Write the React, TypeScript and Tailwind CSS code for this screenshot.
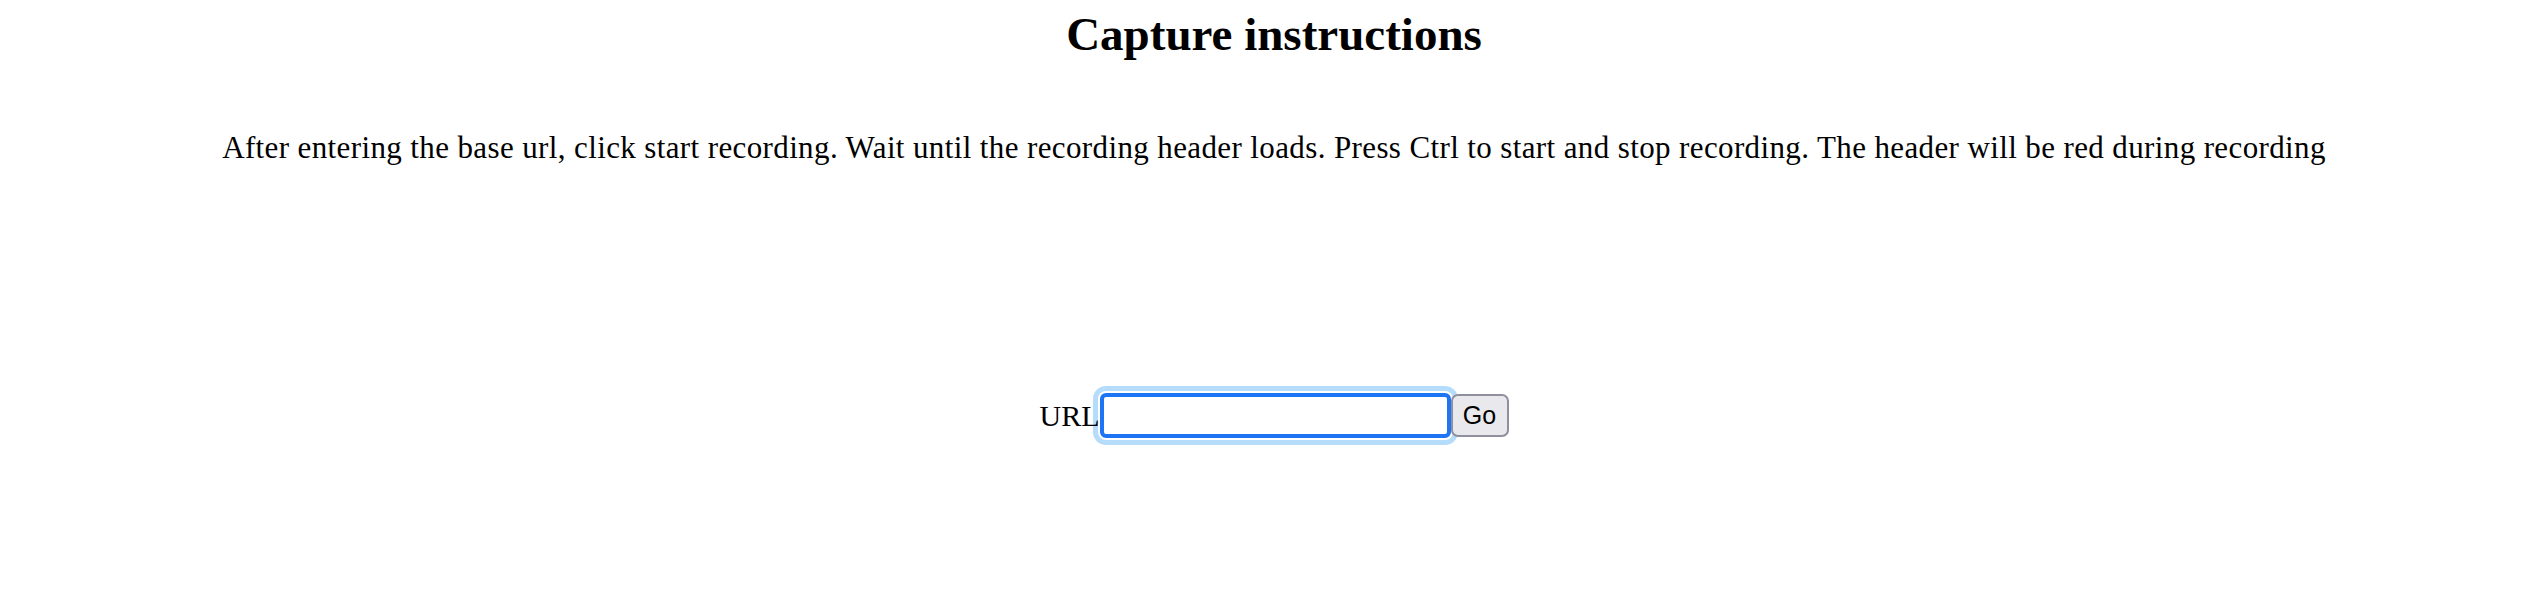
export default function App() {
  return (
    <div className="w-full h-[590px] bg-white text-black font-['Liberation_Serif',serif] flex flex-col items-center">
      {/* Title */}
      <h1 className="mt-[7px] text-[47px] leading-[54px] font-bold">Capture instructions</h1>

      {/* Instructions */}
      <p className="mt-[69px] text-[31px] leading-[35px] tracking-[0.38px] whitespace-nowrap">
        After entering the base url, click start recording. Wait until the recording header loads. Press Ctrl to start and stop recording. The header will be red during recording
      </p>

      {/* URL form */}
      <div className="mt-[228px] flex items-center">
        <label className="relative z-10 text-[30px] leading-[35px]">URL</label>
        <input
          type="text"
          className="w-[351px] h-[45px] bg-white border-4 border-[#1d74f5] rounded-[6px] shadow-[0_0_0_2px_#ffffff,0_0_0_7px_#b6dcfb] outline-none"
        />
        <button className="w-[58px] h-[43px] bg-[#e9e9ed] border-2 border-[#8f8f9d] rounded-[7px] font-['Liberation_Sans',sans-serif] text-[25px] leading-none text-black">
          Go
        </button>
      </div>
    </div>
  );
}
